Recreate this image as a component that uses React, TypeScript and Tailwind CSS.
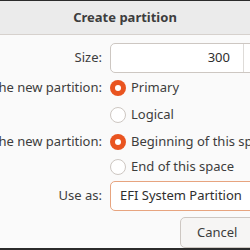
import React from 'react';

const font = { fontFamily: '"Noto Sans", "DejaVu Sans", sans-serif' };

const Radio = ({ checked }: { checked: boolean }) =>
  checked ? (
    <span className="w-[16px] h-[16px] rounded-full bg-[#e95420] flex items-center justify-center shrink-0">
      <span className="w-[6px] h-[6px] rounded-full bg-white" />
    </span>
  ) : (
    <span className="w-[16px] h-[16px] rounded-full border border-[#cdc7c2] bg-white shrink-0" />
  );

const Label = ({ children }: { children: React.ReactNode }) => (
  <div className="w-[102px] shrink-0 flex justify-end whitespace-nowrap text-[#3d3d3d]">{children}</div>
);

const Option = ({ checked, text }: { checked: boolean; text: string }) => (
  <div className="flex items-center gap-[5px] whitespace-nowrap text-[#3d3d3d]">
    <Radio checked={checked} />
    <span>{text}</span>
  </div>
);

export default function App() {
  return (
    <div className="w-[250px] h-[250px] overflow-hidden bg-[#fafafa] flex flex-col text-[13px]" style={font}>
      <div className="h-[1px] shrink-0 bg-[#2b2b2b]" />
      <div className="h-[34px] shrink-0 bg-[#ebebeb] border-b border-[#d6d1cd] flex items-center justify-center font-bold text-[#3d3d3d]">
        Create partition
      </div>
      <div className="flex-1 flex flex-col pt-[8px]">
        <div className="flex items-center gap-[8px] h-[30px]">
          <Label>Size:</Label>
          <div className="flex h-[30px] w-[160px] shrink-0 border border-[#cdc7c2] rounded-[5px] bg-white">
            <div className="w-[133px] flex items-center justify-end pr-[13px] text-[#2e2e2e] border-r border-[#dedbd8]">300</div>
            <div className="flex-1" />
          </div>
        </div>
        <div className="flex items-center gap-[8px] h-[27px] mt-[1px]">
          <Label>Type for the new partition:</Label>
          <Option checked text="Primary" />
        </div>
        <div className="flex items-center gap-[8px] h-[27px]">
          <Label>{''}</Label>
          <Option checked={false} text="Logical" />
        </div>
        <div className="flex items-center gap-[8px] h-[27px]">
          <Label>Location for the new partition:</Label>
          <Option checked text="Beginning of this space" />
        </div>
        <div className="flex items-center gap-[8px] h-[23px]">
          <Label>{''}</Label>
          <Option checked={false} text="End of this space" />
        </div>
        <div className="flex items-center gap-[8px] h-[30px] mt-[3px]">
          <Label>Use as:</Label>
          <div className="flex items-center h-[30px] w-[160px] shrink-0 border border-[#e7a47f] rounded-[5px] bg-white pl-[9px] whitespace-nowrap text-[#2e2e2e]">
            EFI System Partition
          </div>
        </div>
        <div className="flex mt-[6px] pl-[180px]">
          <div className="h-[31px] w-[100px] shrink-0 border border-[#cdc7c2] rounded-[5px] bg-[#f6f5f4] flex items-center pl-[16px] text-[#3d3d3d]">
            Cancel
          </div>
        </div>
      </div>
      <div className="h-[2px] shrink-0 bg-[#2b2b2b]" />
    </div>
  );
}
